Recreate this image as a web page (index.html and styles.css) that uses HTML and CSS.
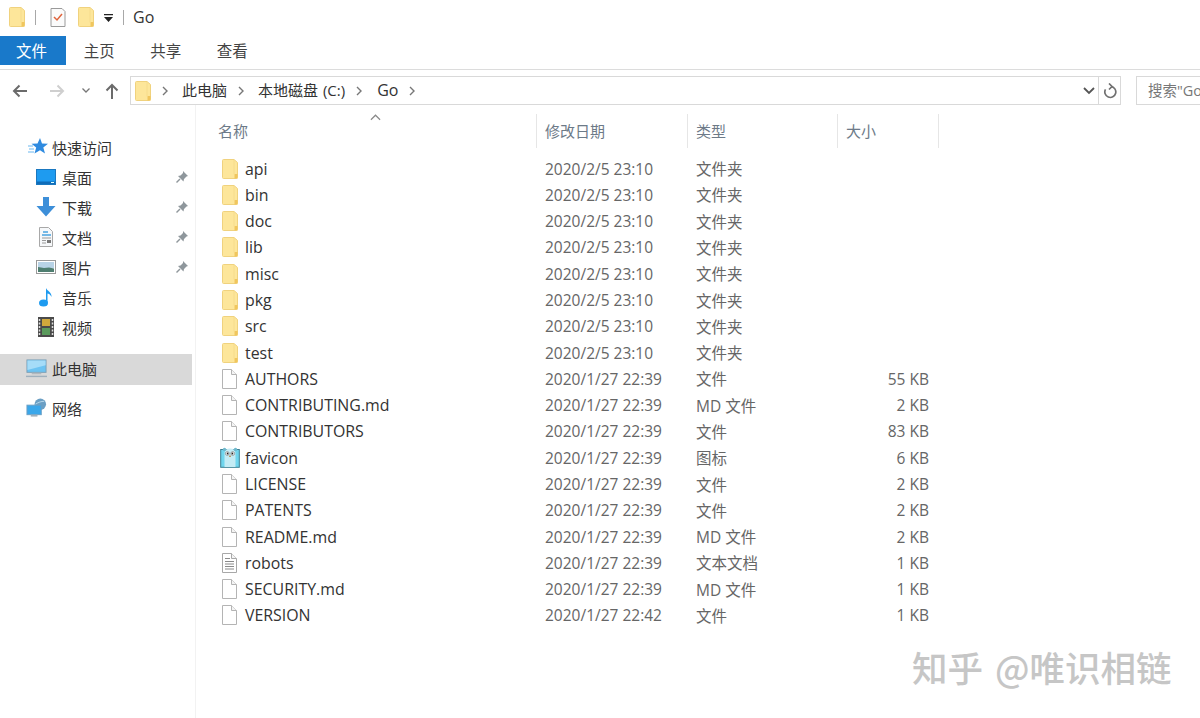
FILE: index.html
```html
<!DOCTYPE html>
<html lang="zh-CN">
<head>
<meta charset="utf-8">
<title>Go</title>
<link rel="stylesheet" href="styles.css">
</head>
<body>
<svg class="defs" aria-hidden="true">
  <symbol id="folder" viewBox="0 0 16 20" preserveAspectRatio="xMinYMid">
    <path d="M.5 1.500a1 1 0 0 1 1-1h10.500l3.500 3v15a1 1 0 0 1-1 1H1.500a1 1 0 0 1-1-1z" fill="#fde69a" stroke="#f0d27e"/>
    <path d="M12.500 15h3v4.500h-3z" fill="#f0c65e"/>
    <path d="M12 1v14.500" stroke="#f6dc8c" fill="none"/>
  </symbol>
  <symbol id="file" viewBox="2 0 18 20" preserveAspectRatio="xMinYMid">
    <path d="M2.500.5h9l5 5v14h-14z" fill="#fff" stroke="#b4b4b4"/>
    <path d="M11.500.5v5h5" fill="#f4f4f4" stroke="#b4b4b4"/>
  </symbol>
  <symbol id="textfile" viewBox="2 0 18 20" preserveAspectRatio="xMinYMid">
    <path d="M2.500.5h9l5 5v14h-14z" fill="#fff" stroke="#a8a8a8"/>
    <path d="M11.500.5v5h5" fill="#f4f4f4" stroke="#a8a8a8"/>
    <path d="M5 5.500h5M5 8.500h9M5 11h9M5 13.500h9M5 16h9" stroke="#8a8a8a" fill="none"/>
  </symbol>
  <symbol id="pin" viewBox="0 0 14 14">
    <path d="M8 1l5 5-1.500.5-2.500 2.500-.5 2.500L3 6l2.500-.5L8 3z" fill="#8f979c"/>
    <path d="M5 9l-3.500 3.500" stroke="#8f979c" stroke-width="1.500"/>
  </symbol>
</svg>

<header class="titlebar">
  <svg class="ico-title"><use href="#folder"/></svg>
  <span class="sep sep-a"></span>
  <svg class="ico-doc" viewBox="0 0 16 20">
    <path d="M1 1.500h11l3 3v15H1z" fill="#fbfbfb" stroke="#9a9a9a"/>
    <path d="M4 10l3 3 5-6" fill="none" stroke="#e0643c" stroke-width="1.500"/>
  </svg>
  <svg class="ico-title ico-title-b"><use href="#folder"/></svg>
  <svg class="ico-drop" viewBox="0 0 9 8"><path d="M0 0h9v1.200H0zM0 3h9L4.500 8z" fill="#222"/></svg>
  <span class="sep sep-b"></span>
  <span class="title-text">Go</span>
</header>

<nav class="tabs">
  <span class="tab tab-active">文件</span>
  <span class="tab">主页</span>
  <span class="tab">共享</span>
  <span class="tab">查看</span>
</nav>

<div class="addressbar">
  <svg class="nav nav-back" viewBox="0 0 16 14"><path d="M15 7H2M7.500 1.500L2 7l5.500 5.500" fill="none" stroke="#6b6b6b" stroke-width="2"/></svg>
  <svg class="nav nav-fwd" viewBox="0 0 16 14"><path d="M1 7h13M8.500 1.500L14 7l-5.500 5.500" fill="none" stroke="#cfcfcf" stroke-width="2"/></svg>
  <svg class="nav-recent" viewBox="0 0 8 5"><path d="M.5.500L4 4 7.500.5" fill="none" stroke="#777" stroke-width="1.300"/></svg>
  <svg class="nav nav-up" viewBox="0 0 14 16"><path d="M7 16V2M1.500 7.500L7 2l5.500 5.500" fill="none" stroke="#6b6b6b" stroke-width="2"/></svg>
  <div class="pathbox">
    <svg class="ico-path"><use href="#folder"/></svg>
    <svg class="chev chev-first" viewBox="0 0 6 10"><path d="M1 1l4 4-4 4" fill="none" stroke="#777" stroke-width="1.400"/></svg>
    <span class="crumb">此电脑</span>
    <svg class="chev" viewBox="0 0 6 10"><path d="M1 1l4 4-4 4" fill="none" stroke="#777" stroke-width="1.400"/></svg>
    <span class="crumb">本地磁盘 (C:)</span>
    <svg class="chev" viewBox="0 0 6 10"><path d="M1 1l4 4-4 4" fill="none" stroke="#777" stroke-width="1.400"/></svg>
    <span class="crumb crumb-go">Go</span>
    <svg class="chev" viewBox="0 0 6 10"><path d="M1 1l4 4-4 4" fill="none" stroke="#777" stroke-width="1.400"/></svg>
    <svg class="path-drop" viewBox="0 0 12 8"><path d="M1 1l5 5 5-5" fill="none" stroke="#555" stroke-width="1.800"/></svg>
    <span class="refresh">
      <svg viewBox="0 0 14 16"><path d="M8 3.500a5.500 5.500 0 1 1-5.500 2.800" fill="none" stroke="#707070" stroke-width="1.700"/><path d="M6 .5l3 3-3 3" fill="none" stroke="#707070" stroke-width="1.700"/></svg>
    </span>
  </div>
  <div class="searchbox">搜索"Go"</div>
</div>

<main class="main">
  <aside class="sidebar">
    <div class="side-row lvl1 quick">
      <svg class="side-ico" viewBox="0 0 20 18"><path d="M12 0l2 5.500 6 .3-4.700 3.700 1.700 6L12 12.200 6.500 15.500l1.700-6L3.500 5.800l6-.3z" fill="#2f8be0"/><path d="M0 8h5M1 11h5M0 14h6" stroke="#9cd0f5" stroke-width="1.400"/></svg>
      <span>快速访问</span>
    </div>
    <div class="side-row lvl2">
      <svg class="side-ico" viewBox="0 0 20 16"><rect x=".5" y=".5" width="19" height="15" fill="#1e9bf0" stroke="#1a78c0"/><rect x="1" y="12.500" width="18" height="2.500" fill="#0f6cb8"/><rect x="15" y="13" width="3" height="1" fill="#dff"/></svg>
      <span class="side-label">桌面</span><svg class="pin"><use href="#pin"/></svg>
    </div>
    <div class="side-row lvl2">
      <svg class="side-ico" viewBox="0 0 20 20"><path d="M7 0h6v9h6.500L10 19.500.5 9H7z" fill="#3d8fd9"/></svg>
      <span class="side-label">下载</span><svg class="pin"><use href="#pin"/></svg>
    </div>
    <div class="side-row lvl2">
      <svg class="side-ico" viewBox="0 0 20 20"><path d="M3.500.5h9l4 4v15h-13z" fill="#f6f8fa" stroke="#a8a8a8"/><path d="M7 5h5M6 8h9" stroke="#4aa3e0" stroke-width="1.300"/><path d="M6 11h9M6 13.500h4M6 16h4" stroke="#9a9a9a"/><rect x="11" y="13" width="4" height="3" fill="#777"/></svg>
      <span class="side-label">文档</span><svg class="pin"><use href="#pin"/></svg>
    </div>
    <div class="side-row lvl2">
      <svg class="side-ico" viewBox="0 0 20 16"><rect x=".5" y="1.500" width="19" height="13" fill="#fff" stroke="#9a9a9a"/><rect x="2" y="3" width="16" height="6" fill="#b8d3e6"/><path d="M2 8l6 1 5-.5 5 1V13H2z" fill="#4e7e70"/></svg>
      <span class="side-label">图片</span><svg class="pin"><use href="#pin"/></svg>
    </div>
    <div class="side-row lvl2">
      <svg class="side-ico" viewBox="0 0 20 20"><ellipse cx="7.500" cy="16" rx="4.500" ry="3.500" fill="#1e9bf0"/><path d="M10 16V1c1 3 6 4 5.500 9-1-2.500-3-3.500-4-3.500V16z" fill="#1e9bf0"/></svg>
      <span class="side-label">音乐</span>
    </div>
    <div class="side-row lvl2">
      <svg class="side-ico" viewBox="0 0 20 20"><rect x="2" y="0" width="16" height="20" fill="#4a4a4a"/><rect x="6" y="2" width="8" height="7" fill="#d0a83c"/><rect x="6" y="11" width="8" height="7" fill="#5a9a5c"/><path d="M3.500 2v16M16.500 2v16" stroke="#ddd" stroke-width="1.500" stroke-dasharray="2 1.500"/></svg>
      <span class="side-label">视频</span>
    </div>
    <div class="side-row lvl1 pc">
      <svg class="side-ico" viewBox="0 0 22 20"><rect x="1" y="0.500" width="20" height="13" fill="#6cc3f2" stroke="#7d9fb5"/><path d="M1.500 1h19v5L1.500 11z" fill="#a5dcf8"/><rect x="6" y="14" width="10" height="1.500" fill="#b0b8be"/><rect x="0" y="17" width="22" height="1.500" fill="#9fb0bc"/></svg>
      <span>此电脑</span>
    </div>
    <div class="side-row lvl1 network">
      <svg class="side-ico" viewBox="0 0 22 20"><circle cx="15" cy="6" r="6" fill="#6b9fc4"/><path d="M10 6c3-2 6-3 9-3" stroke="#b8d8ec" fill="none"/><rect x="1" y="7" width="15" height="10" fill="#3aa7ea" stroke="#6b9fc4"/><rect x="5" y="17" width="7" height="2" fill="#9fb0bc"/></svg>
      <span>网络</span>
    </div>
  </aside>

  <section class="list">
    <div class="head">
      <svg class="sort" viewBox="0 0 12 7"><path d="M1 6l5-5 5 5" fill="none" stroke="#8a8a8a" stroke-width="1.300"/></svg>
      <div class="hcell hname">名称</div>
      <div class="hcell">修改日期</div>
      <div class="hcell">类型</div>
      <div class="hcell">大小</div>
    </div>
    <div class="rows">
      <div class="row"><span class="name"><svg class="ico"><use href="#folder"/></svg>api</span><span class="cell">2020/2/5 23:10</span><span class="cell">文件夹</span><span class="size"></span></div>
      <div class="row"><span class="name"><svg class="ico"><use href="#folder"/></svg>bin</span><span class="cell">2020/2/5 23:10</span><span class="cell">文件夹</span><span class="size"></span></div>
      <div class="row"><span class="name"><svg class="ico"><use href="#folder"/></svg>doc</span><span class="cell">2020/2/5 23:10</span><span class="cell">文件夹</span><span class="size"></span></div>
      <div class="row"><span class="name"><svg class="ico"><use href="#folder"/></svg>lib</span><span class="cell">2020/2/5 23:10</span><span class="cell">文件夹</span><span class="size"></span></div>
      <div class="row"><span class="name"><svg class="ico"><use href="#folder"/></svg>misc</span><span class="cell">2020/2/5 23:10</span><span class="cell">文件夹</span><span class="size"></span></div>
      <div class="row"><span class="name"><svg class="ico"><use href="#folder"/></svg>pkg</span><span class="cell">2020/2/5 23:10</span><span class="cell">文件夹</span><span class="size"></span></div>
      <div class="row"><span class="name"><svg class="ico"><use href="#folder"/></svg>src</span><span class="cell">2020/2/5 23:10</span><span class="cell">文件夹</span><span class="size"></span></div>
      <div class="row"><span class="name"><svg class="ico"><use href="#folder"/></svg>test</span><span class="cell">2020/2/5 23:10</span><span class="cell">文件夹</span><span class="size"></span></div>
      <div class="row"><span class="name"><svg class="ico"><use href="#file"/></svg>AUTHORS</span><span class="cell">2020/1/27 22:39</span><span class="cell">文件</span><span class="size">55 KB</span></div>
      <div class="row"><span class="name"><svg class="ico"><use href="#file"/></svg>CONTRIBUTING.md</span><span class="cell">2020/1/27 22:39</span><span class="cell">MD 文件</span><span class="size">2 KB</span></div>
      <div class="row"><span class="name"><svg class="ico"><use href="#file"/></svg>CONTRIBUTORS</span><span class="cell">2020/1/27 22:39</span><span class="cell">文件</span><span class="size">83 KB</span></div>
      <div class="row"><span class="name"><svg class="ico ico-go" viewBox="0 0 20 21"><rect x=".7" y="2.500" width="18.600" height="17.800" fill="#6fd6ee" stroke="#3d7f92"/><path d="M4.500 20V6c0-3 2-4.500 5.500-4.500S15.500 3 15.500 6v14z" fill="#c4ecf5"/><circle cx="4.500" cy="2.500" r="1.700" fill="#6fb8cc"/><circle cx="15.500" cy="2.500" r="1.700" fill="#6fb8cc"/><circle cx="7.300" cy="6.500" r="1.900" fill="#fff" stroke="#555" stroke-width=".5"/><circle cx="12.700" cy="6.500" r="1.900" fill="#fff" stroke="#555" stroke-width=".5"/><circle cx="7.600" cy="6.500" r=".9" fill="#222"/><circle cx="12.400" cy="6.500" r=".9" fill="#222"/><path d="M9 8.500h2v1.500H9z" fill="#b99a6a"/></svg>favicon</span><span class="cell">2020/1/27 22:39</span><span class="cell">图标</span><span class="size">6 KB</span></div>
      <div class="row"><span class="name"><svg class="ico"><use href="#file"/></svg>LICENSE</span><span class="cell">2020/1/27 22:39</span><span class="cell">文件</span><span class="size">2 KB</span></div>
      <div class="row"><span class="name"><svg class="ico"><use href="#file"/></svg>PATENTS</span><span class="cell">2020/1/27 22:39</span><span class="cell">文件</span><span class="size">2 KB</span></div>
      <div class="row"><span class="name"><svg class="ico"><use href="#file"/></svg>README.md</span><span class="cell">2020/1/27 22:39</span><span class="cell">MD 文件</span><span class="size">2 KB</span></div>
      <div class="row"><span class="name"><svg class="ico"><use href="#textfile"/></svg>robots</span><span class="cell">2020/1/27 22:39</span><span class="cell">文本文档</span><span class="size">1 KB</span></div>
      <div class="row"><span class="name"><svg class="ico"><use href="#file"/></svg>SECURITY.md</span><span class="cell">2020/1/27 22:39</span><span class="cell">MD 文件</span><span class="size">1 KB</span></div>
      <div class="row"><span class="name"><svg class="ico"><use href="#file"/></svg>VERSION</span><span class="cell">2020/1/27 22:42</span><span class="cell">文件</span><span class="size">1 KB</span></div>
    </div>
  </section>
</main>
<div class="watermark">知乎 @唯识相链</div>
</body>
</html>
```
FILE: styles.css
```css
* { box-sizing: border-box; }
html, body { margin: 0; height: 718px; overflow: hidden; background: #fff; }
body {
  position: relative;
  display: flex;
  flex-direction: column;
  font-family: "Open Sans", "Noto Sans CJK SC", sans-serif;
  font-size: 15.5px;
  color: #333;
}
.defs { position: absolute; width: 0; height: 0; }

/* title bar */
.titlebar { height: 36px; display: flex; align-items: center; padding-left: 9px; flex: none; }
.ico-title { width: 16px; height: 20px; margin-bottom: 2px; }
.ico-title-b { margin-left: 12px; }
.ico-doc { width: 16px; height: 20px; margin-left: 14px; margin-bottom: 2px; }
.ico-drop { width: 9px; height: 8px; margin-left: 10px; }
.sep { width: 1px; height: 15px; background: #a8a8a8; margin-bottom: 2px; }
.sep-a { margin-left: 10px; }
.sep-b { margin-left: 10px; }
.title-text { margin-left: 9px; font-size: 16px; color: #333; margin-bottom: 2px; }

/* tabs */
.tabs { height: 34px; flex: none; display: flex; border-bottom: 1px solid #dcdcdc; padding-bottom: 4px; font-size: 15.5px; }
.tab { width: 66.500px; display: flex; align-items: center; justify-content: center; color: #444; }
.tab-active { width: 66px; background: #1979ca; color: #fff; padding-right: 3px; }

/* address bar */
.addressbar { height: 35px; flex: none; display: flex; align-items: center; padding: 6px 0 0 12px; }
.nav { width: 16px; height: 14px; flex: none; }
.nav-fwd { margin-left: 21px; }
.nav-recent { width: 8px; height: 5px; margin-left: 17px; flex: none; }
.nav-up { width: 14px; height: 16px; margin-left: 15px; flex: none; }
.pathbox {
  width: 991px; height: 29px; margin-left: 11px; flex: none;
  border: 1px solid #d9d9d9; display: flex; align-items: center; padding-left: 4px;
  font-size: 15px;
}
.ico-path { width: 16px; height: 20px; }
.chev { width: 6px; height: 10px; margin: 0 14px 0 11px; flex: none; }
.chev-first { margin: 0 14px 0 11px; }
.crumb { color: #333; word-spacing: 1px; margin-bottom: 2px; }
.crumb-go { font-size: 16px; margin-left: 1px; }
.path-drop { width: 12px; height: 8px; margin-left: auto; }
.refresh { width: 22px; height: 27px; margin-left: 3px; border-left: 1px solid #d9d9d9; display: flex; align-items: center; justify-content: center; }
.refresh svg { width: 14px; height: 16px; }
.searchbox {
  width: 80px; height: 29px; margin-left: 15px; flex: none; border: 1px solid #d9d9d9;
  border-right: 0; padding-left: 11px; line-height: 27px; color: #777; font-size: 14.500px; white-space: nowrap; overflow: hidden;
}

/* main */
.main { flex: 1; min-height: 0; display: flex; }
.sidebar { width: 196px; flex: none; border-right: 1px solid #f2f2f2; padding-top: 27px; font-size: 15px; }
.side-row { height: 30px; display: flex; align-items: center; margin-right: 3px; }
.lvl1 { padding-left: 26px; }
.lvl2 { padding-left: 36px; }
.side-ico { width: 20px; height: 20px; flex: none; margin-right: 6px; }
.lvl1 .side-ico { width: 21px; margin-right: 5px; }
.side-label { flex: 1; }
.pin { width: 14px; height: 14px; margin-right: 3px; flex: none; }
.quick { padding-left: 28px; }
.quick .side-ico { width: 20px; height: 18px; margin-right: 4px; }
.pc { background: #d9d9d9; height: 31px; margin-top: 12px; padding-bottom: 2px; }
.network { margin-top: 8px; }

/* list */
.list { flex: 1; min-width: 0; position: relative; }
.head { position: relative; display: grid; grid-template-columns: 320px 151px 150px 101px; margin-left: 21px; height: 50px; padding-top: 9px; }
.hcell { border-right: 1px solid #e6e6e6; padding-left: 8px; line-height: 34px; height: 34px; color: #6d7a88; font-size: 15px; }
.hname { padding-left: 1px; }
.sort { position: absolute; left: 153px; top: 9px; width: 11px; height: 7px; }
.rows { padding-top: 0.500px; }
.row { display: grid; grid-template-columns: 349px 151px 150px 83px; height: 26.290px; align-items: center; color: #666; }
.name { display: flex; align-items: center; padding-left: 26px; color: #333; font-size: 15.900px; white-space: nowrap; }
.ico { width: 18px; height: 20px; margin-right: 5px; flex: none; }
.ico-go { width: 20px; height: 21px; margin: 0 5px 0 -2px; }
.size { text-align: right; }

.watermark {
  position: absolute; left: 912px; top: 646px; font-size: 35.500px; line-height: 42px; color: #c6c6c6;
  font-weight: 500; word-spacing: 4px;
  font-family: "Noto Sans CJK SC", sans-serif; white-space: nowrap;
}
```
